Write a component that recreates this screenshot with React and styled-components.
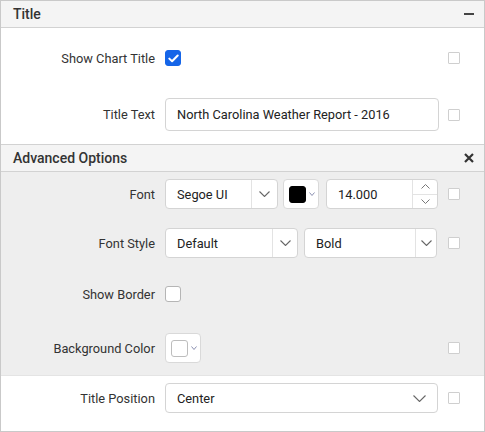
import React from "react";
import styled, { createGlobalStyle } from "styled-components";

const Global = createGlobalStyle`
  html, body { margin: 0; padding: 0; background: #fff; }
  body { font-family: Roboto, "Noto Sans", Arial, sans-serif; color: #333; }
  * { box-sizing: border-box; }
`;

const Panel = styled.div`
  width: 485px;
  height: 432px;
  border: 1px solid #c9c9c9;
  display: flex;
  flex-direction: column;
  overflow: hidden;
`;

const Header = styled.div`
  height: ${(p) => (p.$top ? 27 : 28)}px;
  background: #f4f4f4;
  border-bottom: 1px solid #d2d2d2;
  border-top: ${(p) => (p.$top ? "none" : "1px solid #d2d2d2")};
  display: flex;
  align-items: center;
  justify-content: space-between;
  padding: 0 10px 0 12px;
  font-size: 14px;
  font-weight: 500;
  color: #333;
  flex-shrink: 0;
`;

const Body = styled.div`
  background: ${(p) => (p.$grey ? "#eeeeee" : "#ffffff")};
  display: flex;
  flex-direction: column;
  padding: ${(p) => p.$pad};
  border-bottom: ${(p) => (p.$grey ? "1px solid #e4e4e4" : "none")};
  flex-shrink: 0;
`;

const Row = styled.div`
  display: flex;
  align-items: center;
  height: ${(p) => p.$h || 30}px;
  margin-top: ${(p) => p.$mt || 0}px;
`;

const Label = styled.div`
  width: 154px;
  text-align: right;
  font-size: 12.8px;
  color: #333;
  margin-right: 10px;
  flex-shrink: 0;
`;

const Controls = styled.div`
  width: 274px;
  display: flex;
  align-items: center;
  flex-shrink: 0;
`;

const Extra = styled.div`
  width: 12px;
  height: 12px;
  border: 1px solid #cfcfcf;
  border-radius: 1px;
  background: #fff;
  margin-left: 9px;
  flex-shrink: 0;
`;

const Check = styled.div`
  width: 16px;
  height: 16px;
  border-radius: 3px;
  background: ${(p) => (p.$on ? "#1565e8" : "#fff")};
  border: 1px solid ${(p) => (p.$on ? "#1565e8" : "#b5b5b5")};
  display: flex;
  align-items: center;
  justify-content: center;
`;

const TextInput = styled.div`
  width: ${(p) => p.$w}px;
  height: 33px;
  border: 1px solid #d4d4d4;
  border-radius: 4px;
  background: #fff;
  font-size: 12.8px;
  color: #222;
  display: flex;
  align-items: center;
  padding-left: 11px;
`;

const Select = styled.div`
  width: ${(p) => p.$w}px;
  height: 30px;
  margin-left: ${(p) => p.$ml || 0}px;
  border: 1px solid #d4d4d4;
  border-radius: 4px;
  background: #fff;
  display: flex;
  align-items: stretch;
  font-size: 12.8px;
  color: #222;
  flex-shrink: 0;
`;

const SelectText = styled.div`
  flex: 1;
  display: flex;
  align-items: center;
  padding-left: 11px;
`;

const Arrow = styled.div`
  width: ${(p) => p.$w}px;
  border-left: ${(p) => (p.$div ? "1px solid #e3e3e3" : "none")};
  display: flex;
  align-items: center;
  justify-content: center;
  padding-right: ${(p) => p.$pr || 0}px;
`;

const Spinner = styled.div`
  width: 25px;
  border-left: 1px solid #e3e3e3;
  display: flex;
  flex-direction: column;
`;

const SpinHalf = styled.div`
  flex: 1;
  display: flex;
  align-items: center;
  justify-content: center;
  border-top: ${(p) => (p.$bottom ? "1px solid #e3e3e3" : "none")};
`;

const ColorBtn = styled.div`
  width: 36px;
  height: 30px;
  margin-left: ${(p) => p.$ml || 0}px;
  border: 1px solid #d9d9d9;
  border-radius: 4px;
  background: #fff;
  display: flex;
  align-items: center;
  padding-left: 5px;
  gap: 3px;
  flex-shrink: 0;
`;

const Swatch = styled.div`
  width: 17px;
  height: 17px;
  border-radius: 3px;
  background: ${(p) => p.$c};
  border: 1px solid ${(p) => (p.$c === "#000" ? "#000" : "#bdbdbd")};
`;

const Chevron = ({ w = 11, h = 6, color = "#666", sw = 1.1, up = false }) => (
  <svg width={w} height={h} viewBox={`0 0 ${w} ${h}`} fill="none">
    <polyline
      points={up ? `0.5,${h - 0.5} ${w / 2},0.5 ${w - 0.5},${h - 0.5}` : `0.5,0.5 ${w / 2},${h - 0.5} ${w - 0.5},0.5`}
      stroke={color}
      strokeWidth={sw}
    />
  </svg>
);

const Tick = () => (
  <svg width="11" height="9" viewBox="0 0 11 9" fill="none">
    <polyline points="1.3,4.6 4.1,7.3 9.7,1.5" stroke="#fff" strokeWidth="2" strokeLinecap="round" strokeLinejoin="round" />
  </svg>
);

const Minus = () => (
  <svg width="10" height="2" viewBox="0 0 10 2">
    <rect width="10" height="2" fill="#444" />
  </svg>
);

const Close = () => (
  <svg width="10" height="10" viewBox="0 0 10 10">
    <path d="M1 1 L9 9 M9 1 L1 9" stroke="#333" strokeWidth="2.2" />
  </svg>
);

const DropDown = ({ w, ml, text, aw, div = true, cw = 11, ch = 6, pr = 0 }) => (
  <Select $w={w} $ml={ml}>
    <SelectText>{text}</SelectText>
    <Arrow $w={aw} $div={div} $pr={pr}>
      <Chevron w={cw} h={ch} />
    </Arrow>
  </Select>
);

export default function App() {
  return (
    <>
      <Global />
      <Panel>
        <Header $top>
          <span>Title</span>
          <Minus />
        </Header>
        <Body $pad="0 0 0 0">
          <Row $h={60}>
            <Label>Show Chart Title</Label>
            <Controls>
              <Check $on>
                <Tick />
              </Check>
            </Controls>
            <Extra />
          </Row>
          <Row $h={33} $mt={10}>
            <Label>Title Text</Label>
            <Controls>
              <TextInput $w={274}>North Carolina Weather Report - 2016</TextInput>
            </Controls>
            <Extra />
          </Row>
          <Row $h={13} />
        </Body>
        <Header>
          <span>Advanced Options</span>
          <Close />
        </Header>
        <Body $grey $pad="7px 0 12px 0">
          <Row>
            <Label>Font</Label>
            <Controls>
              <DropDown w={113} text="Segoe UI" aw={26} />
              <ColorBtn $ml={5}>
                <Swatch $c="#000" />
                <Chevron w={6} h={4} color="#8a8fb0" sw={1} />
              </ColorBtn>
              <Select $w={112} $ml={7}>
                <SelectText>14.000</SelectText>
                <Spinner>
                  <SpinHalf>
                    <Chevron w={9} h={5} up color="#777" sw={1} />
                  </SpinHalf>
                  <SpinHalf $bottom>
                    <Chevron w={9} h={5} color="#777" sw={1} />
                  </SpinHalf>
                </Spinner>
              </Select>
            </Controls>
            <Extra />
          </Row>
          <Row $mt={19}>
            <Label>Font Style</Label>
            <Controls>
              <DropDown w={133} text="Default" aw={25} />
              <DropDown w={133} ml={6} text="Bold" aw={21} />
            </Controls>
            <Extra />
          </Row>
          <Row $mt={21}>
            <Label>Show Border</Label>
            <Controls>
              <Check />
            </Controls>
          </Row>
          <Row $mt={24}>
            <Label>Background Color</Label>
            <Controls>
              <ColorBtn>
                <Swatch $c="#fff" />
                <Chevron w={6} h={4} color="#8a8fb0" sw={1} />
              </ColorBtn>
            </Controls>
            <Extra />
          </Row>
        </Body>
        <Body $pad="7px 0 0 0">
          <Row>
            <Label>Title Position</Label>
            <Controls>
              <DropDown w={273} text="Center" aw={30} div={false} cw={13} ch={7} pr={6} />
            </Controls>
            <Extra />
          </Row>
        </Body>
      </Panel>
    </>
  );
}
